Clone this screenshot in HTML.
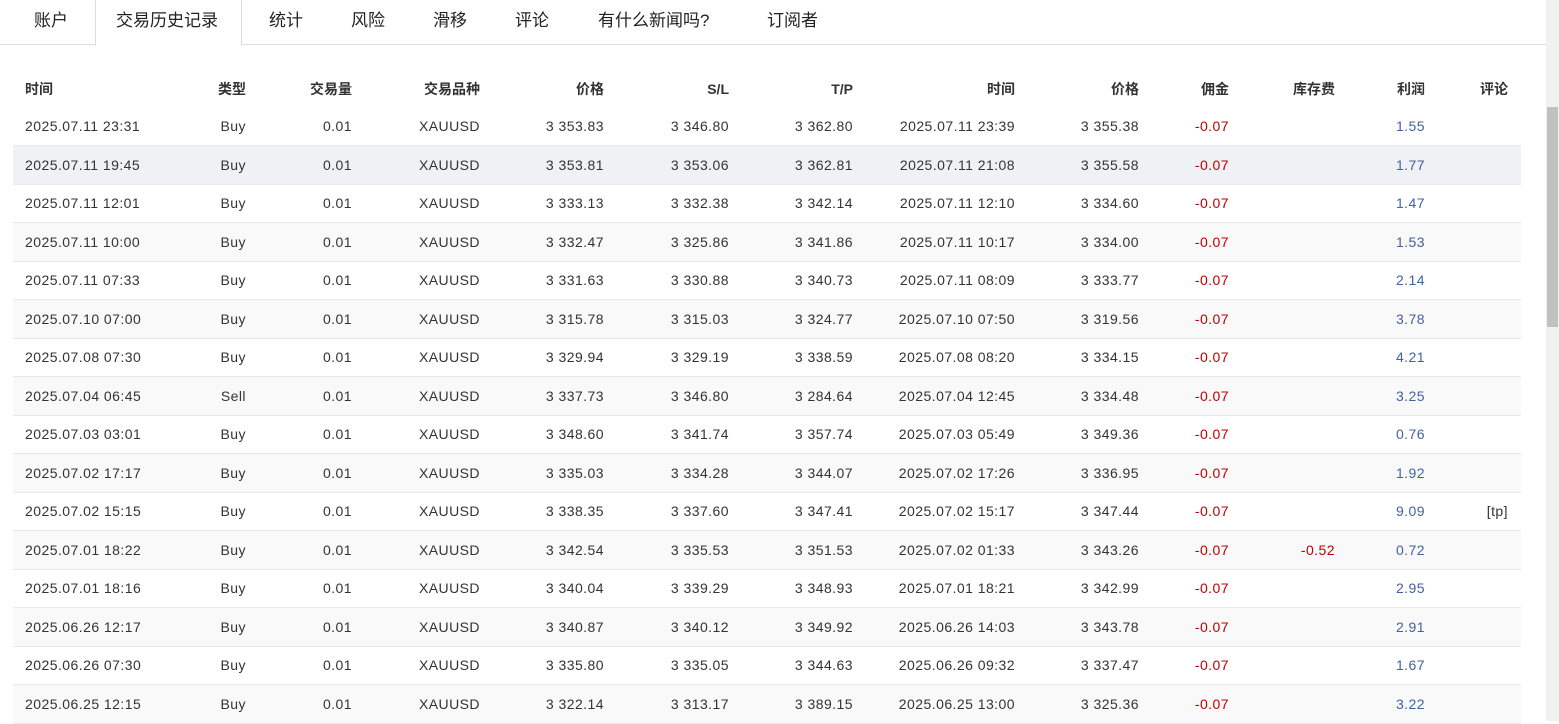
<!DOCTYPE html>
<html><head><meta charset="utf-8"><style>
*{margin:0;padding:0;box-sizing:border-box}
body{width:1559px;height:721px;overflow:hidden;background:#fff;font-family:"Liberation Sans","Noto Sans CJK SC",sans-serif;color:#333;position:relative}
.tabs{position:absolute;left:0;top:0;width:1546px;height:45px;border-bottom:1px solid #ddd}
.tab{position:absolute;top:6px;font-size:17px;color:#222}
.act{position:absolute;left:95px;top:0;width:147px;height:46px;background:#fff;border-left:1px solid #ddd;border-right:1px solid #ddd}
.sb{position:absolute;left:1546px;top:0;width:13px;height:721px;background:#f1f1f1}
.th{position:absolute;left:1547px;top:107px;width:11px;height:220px;background:#c1c1c1}
table{position:absolute;left:13px;top:70px;border-collapse:collapse;table-layout:fixed;width:1508px;font-size:14px}
td,th{text-align:right;white-space:nowrap;padding:0;height:38.5px;border-bottom:1px solid #e8e8e8}
td{letter-spacing:0.45px}
th{font-weight:bold;height:37px;border:none;color:#333}
td:first-child,th:first-child{text-align:left;padding-left:12px}
tbody tr:nth-child(even){background:#f9f9f9}
tbody tr.h{background:#eff1f5}
.r{color:#c00000}.p{color:#44619e}
</style></head><body>
<div class="tabs"></div>
<div class="act"></div>
<div class="tab" style="left:34px">账户</div>
<div class="tab" style="left:116px">交易历史记录</div>
<div class="tab" style="left:269px">统计</div>
<div class="tab" style="left:351px">风险</div>
<div class="tab" style="left:433px">滑移</div>
<div class="tab" style="left:515px">评论</div>
<div class="tab" style="left:598px">有什么新闻吗?</div>
<div class="tab" style="left:767px">订阅者</div>
<div class="sb"></div><div class="th"></div>
<table>
<colgroup><col style="width:150px"><col style="width:83px"><col style="width:106px"><col style="width:128px"><col style="width:124px"><col style="width:125px"><col style="width:124px"><col style="width:162px"><col style="width:124px"><col style="width:90px"><col style="width:106px"><col style="width:90px"><col style="width:83px"><col style="width:13px"></colgroup>
<thead><tr><th>时间</th><th>类型</th><th>交易量</th><th>交易品种</th><th>价格</th><th>S/L</th><th>T/P</th><th>时间</th><th>价格</th><th>佣金</th><th>库存费</th><th>利润</th><th>评论</th><th></th></tr></thead>
<tbody>
<tr><td>2025.07.11 23:31</td><td>Buy</td><td>0.01</td><td>XAUUSD</td><td>3 353.83</td><td>3 346.80</td><td>3 362.80</td><td>2025.07.11 23:39</td><td>3 355.38</td><td class="r">-0.07</td><td></td><td class="p">1.55</td><td></td><td></td></tr>
<tr class="h"><td>2025.07.11 19:45</td><td>Buy</td><td>0.01</td><td>XAUUSD</td><td>3 353.81</td><td>3 353.06</td><td>3 362.81</td><td>2025.07.11 21:08</td><td>3 355.58</td><td class="r">-0.07</td><td></td><td class="p">1.77</td><td></td><td></td></tr>
<tr><td>2025.07.11 12:01</td><td>Buy</td><td>0.01</td><td>XAUUSD</td><td>3 333.13</td><td>3 332.38</td><td>3 342.14</td><td>2025.07.11 12:10</td><td>3 334.60</td><td class="r">-0.07</td><td></td><td class="p">1.47</td><td></td><td></td></tr>
<tr><td>2025.07.11 10:00</td><td>Buy</td><td>0.01</td><td>XAUUSD</td><td>3 332.47</td><td>3 325.86</td><td>3 341.86</td><td>2025.07.11 10:17</td><td>3 334.00</td><td class="r">-0.07</td><td></td><td class="p">1.53</td><td></td><td></td></tr>
<tr><td>2025.07.11 07:33</td><td>Buy</td><td>0.01</td><td>XAUUSD</td><td>3 331.63</td><td>3 330.88</td><td>3 340.73</td><td>2025.07.11 08:09</td><td>3 333.77</td><td class="r">-0.07</td><td></td><td class="p">2.14</td><td></td><td></td></tr>
<tr><td>2025.07.10 07:00</td><td>Buy</td><td>0.01</td><td>XAUUSD</td><td>3 315.78</td><td>3 315.03</td><td>3 324.77</td><td>2025.07.10 07:50</td><td>3 319.56</td><td class="r">-0.07</td><td></td><td class="p">3.78</td><td></td><td></td></tr>
<tr><td>2025.07.08 07:30</td><td>Buy</td><td>0.01</td><td>XAUUSD</td><td>3 329.94</td><td>3 329.19</td><td>3 338.59</td><td>2025.07.08 08:20</td><td>3 334.15</td><td class="r">-0.07</td><td></td><td class="p">4.21</td><td></td><td></td></tr>
<tr><td>2025.07.04 06:45</td><td>Sell</td><td>0.01</td><td>XAUUSD</td><td>3 337.73</td><td>3 346.80</td><td>3 284.64</td><td>2025.07.04 12:45</td><td>3 334.48</td><td class="r">-0.07</td><td></td><td class="p">3.25</td><td></td><td></td></tr>
<tr><td>2025.07.03 03:01</td><td>Buy</td><td>0.01</td><td>XAUUSD</td><td>3 348.60</td><td>3 341.74</td><td>3 357.74</td><td>2025.07.03 05:49</td><td>3 349.36</td><td class="r">-0.07</td><td></td><td class="p">0.76</td><td></td><td></td></tr>
<tr><td>2025.07.02 17:17</td><td>Buy</td><td>0.01</td><td>XAUUSD</td><td>3 335.03</td><td>3 334.28</td><td>3 344.07</td><td>2025.07.02 17:26</td><td>3 336.95</td><td class="r">-0.07</td><td></td><td class="p">1.92</td><td></td><td></td></tr>
<tr><td>2025.07.02 15:15</td><td>Buy</td><td>0.01</td><td>XAUUSD</td><td>3 338.35</td><td>3 337.60</td><td>3 347.41</td><td>2025.07.02 15:17</td><td>3 347.44</td><td class="r">-0.07</td><td></td><td class="p">9.09</td><td>[tp]</td><td></td></tr>
<tr><td>2025.07.01 18:22</td><td>Buy</td><td>0.01</td><td>XAUUSD</td><td>3 342.54</td><td>3 335.53</td><td>3 351.53</td><td>2025.07.02 01:33</td><td>3 343.26</td><td class="r">-0.07</td><td class="r">-0.52</td><td class="p">0.72</td><td></td><td></td></tr>
<tr><td>2025.07.01 18:16</td><td>Buy</td><td>0.01</td><td>XAUUSD</td><td>3 340.04</td><td>3 339.29</td><td>3 348.93</td><td>2025.07.01 18:21</td><td>3 342.99</td><td class="r">-0.07</td><td></td><td class="p">2.95</td><td></td><td></td></tr>
<tr><td>2025.06.26 12:17</td><td>Buy</td><td>0.01</td><td>XAUUSD</td><td>3 340.87</td><td>3 340.12</td><td>3 349.92</td><td>2025.06.26 14:03</td><td>3 343.78</td><td class="r">-0.07</td><td></td><td class="p">2.91</td><td></td><td></td></tr>
<tr><td>2025.06.26 07:30</td><td>Buy</td><td>0.01</td><td>XAUUSD</td><td>3 335.80</td><td>3 335.05</td><td>3 344.63</td><td>2025.06.26 09:32</td><td>3 337.47</td><td class="r">-0.07</td><td></td><td class="p">1.67</td><td></td><td></td></tr>
<tr><td>2025.06.25 12:15</td><td>Buy</td><td>0.01</td><td>XAUUSD</td><td>3 322.14</td><td>3 313.17</td><td>3 389.15</td><td>2025.06.25 13:00</td><td>3 325.36</td><td class="r">-0.07</td><td></td><td class="p">3.22</td><td></td><td></td></tr>
</tbody></table>
</body></html>
